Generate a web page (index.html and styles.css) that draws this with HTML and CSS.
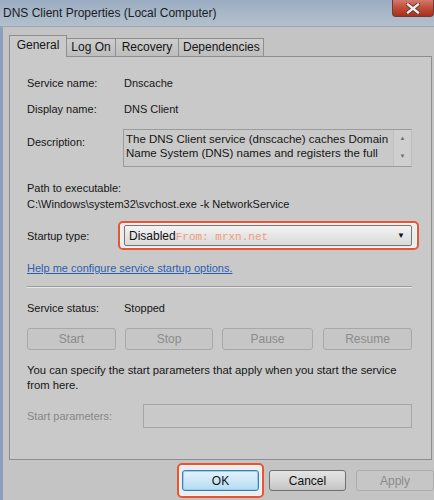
FILE: index.html
```html
<!DOCTYPE html>
<html lang="en">
<head>
  <meta charset="UTF-8">
  <title>DNS Client Properties (Local Computer)</title>
  <link rel="stylesheet" href="styles.css">
</head>
<body>
  <div class="window">
    <div class="titlebar">
      <span class="caption">DNS Client Properties (Local Computer)</span>
      <span class="close">
        <svg width="14" height="11" viewBox="0 0 14 11">
          <path d="M2 1.5 L12 9.5 M12 1.5 L2 9.5" stroke="#5a2a22" stroke-width="4" stroke-linecap="square"/>
          <path d="M2 1.5 L12 9.5 M12 1.5 L2 9.5" stroke="#ececec" stroke-width="2.4" stroke-linecap="square"/>
        </svg>
      </span>
    </div>

    <div class="client">
      <div class="tabs">
        <div class="tab active">General</div>
        <div class="tab">Log On</div>
        <div class="tab">Recovery</div>
        <div class="tab">Dependencies</div>
      </div>

      <div class="panel">
        <div class="row">
          <span class="label">Service name:</span>
          <span>Dnscache</span>
        </div>
        <div class="row gap-12">
          <span class="label">Display name:</span>
          <span>DNS Client</span>
        </div>
        <div class="row desc-row">
          <span class="label">Description:</span>
          <div class="textbox">
            <div class="textbox-text">The DNS Client service (dnscache) caches Domain Name System (DNS) names and registers the full</div>
            <div class="scrollbar">
              <span class="arrow">&#9650;</span>
              <span class="arrow">&#9660;</span>
            </div>
          </div>
        </div>

        <div class="path">
          <div>Path to executable:</div>
          <div>C:\Windows\system32\svchost.exe -k NetworkService</div>
        </div>

        <div class="row startup-row">
          <span class="label short">Startup type:</span>
          <div class="mark">
            <div class="combo">
              <span>Disabled</span><span class="stamp">From: mrxn.net</span>
              <span class="combo-arrow">&#9660;</span>
            </div>
          </div>
        </div>

        <a class="link" href="#">Help me configure service startup options.</a>

        <div class="separator"></div>

        <div class="row status-row">
          <span class="label">Service status:</span>
          <span>Stopped</span>
        </div>

        <div class="service-buttons">
          <button class="btn start" disabled>Start</button>
          <button class="btn stop" disabled>Stop</button>
          <button class="btn pause" disabled>Pause</button>
          <button class="btn resume" disabled>Resume</button>
        </div>

        <p class="hint">You can specify the start parameters that apply when you start the service from here.</p>

        <div class="row params-row">
          <span class="label muted">Start parameters:</span>
          <div class="params-input"></div>
        </div>
      </div>

      <div class="footer">
        <div class="mark ok-mark">
          <button class="btn dialog default">OK</button>
        </div>
        <button class="btn dialog">Cancel</button>
        <button class="btn dialog" disabled>Apply</button>
      </div>
    </div>
  </div>
</body>
</html>
```

FILE: styles.css
```css
html, body {
  margin: 0;
  padding: 0;
}

body {
  width: 434px;
  height: 500px;
  overflow: hidden;
  font-family: "Liberation Sans", Arial, sans-serif;
  font-size: 11px;
  color: #161616;
  background: #c3c3c3;
}

.window {
  display: flex;
  flex-direction: column;
  height: 500px;
}

/* caption bar */
.titlebar {
  height: 27px;
  display: flex;
  align-items: flex-start;
  justify-content: space-between;
  background: linear-gradient(180deg, #9badc2 0%, #a9b8c9 55%, #b3bfcc 100%);
  border-bottom: 1px solid #9aa6b4;
  box-sizing: border-box;
}

.caption {
  margin: 6px 0 0 3px;
  font-size: 12px;
  line-height: 14px;
  color: #1c1c1c;
}

.close {
  width: 42px;
  height: 17px;
  display: flex;
  align-items: center;
  justify-content: center;
  background: linear-gradient(180deg, #d27a6c 0%, #c1503c 45%, #a8301c 100%);
  border: 1px solid #6e3a33;
  border-top: none;
  border-radius: 0 0 4px 4px;
  box-sizing: border-box;
}

/* dialog body */
.client {
  flex: 1;
  display: flex;
  flex-direction: column;
  padding: 8px 2px 0 6px;
  border-left: 3px solid #8aa0bc;
  background: #c4c4c4;
}

.tabs {
  display: flex;
  align-items: flex-end;
  height: 21px;
  position: relative;
  z-index: 1;
}

.tab {
  height: 18px;
  line-height: 17px;
  padding: 0 4px;
  border: 1px solid #8e8e8e;
  border-bottom: none;
  border-left: none;
  background: linear-gradient(180deg, #cdcdcd 0%, #bdbdbd 100%);
  box-sizing: border-box;
  font-size: 12px;
  white-space: nowrap;
  text-align: center;
}

.tab:nth-child(2) { width: 49px; }
.tab:nth-child(3) { width: 63px; }
.tab:nth-child(4) { width: 85px; }

.tab.active {
  width: 58px;
  height: 22px;
  margin-bottom: -1px;
  line-height: 19px;
  border-left: 1px solid #8e8e8e;
  background: #c9c9c9;
}

.panel {
  display: flex;
  flex-direction: column;
  width: 423px;
  height: 404px;
  padding: 19px 19px 0 17px;
  border: 1px solid #8e8e8e;
  background: #c9c9c9;
  box-sizing: border-box;
}

.row {
  display: flex;
  align-items: center;
  line-height: 14px;
}

.label {
  width: 97px;
  flex: none;
}

.label.short {
  width: 91px;
}

.muted {
  color: #878787;
}

.gap-12 {
  margin-top: 12px;
}

.desc-row {
  align-items: flex-start;
  margin-top: 13px;
}

.desc-row .label {
  padding-top: 6px;
  width: 96px;
}

.textbox {
  flex: 1;
  height: 38px;
  display: flex;
  border: 1px solid #9c9c9c;
  border-right-color: #bdbdbd;
  box-sizing: border-box;
  background: #c9c9c9;
}

.textbox-text {
  flex: 1;
  padding: 2px 2px 0 2px;
  line-height: 14px;
  font-size: 11.5px;
  overflow: hidden;
}

.scrollbar {
  width: 17px;
  display: flex;
  flex-direction: column;
  justify-content: space-between;
  align-items: center;
  padding: 4px 0 6px;
  background: #cfcfcf;
  border-left: 1px solid #c0c0c0;
}

.arrow {
  font-size: 6px;
  line-height: 8px;
  color: #6e6e6e;
}

.path {
  margin-top: 13px;
  line-height: 16px;
}

.startup-row {
  margin-top: 9px;
}

/* red annotation frames */
.mark {
  border: 2px solid #e85530;
  border-radius: 5px;
  background: #ededed;
  box-shadow: inset 0 0 0 1px #f8f8f8;
}

.startup-row .mark {
  flex: 1;
  padding: 2px 5px 2px 4px;
  margin-right: -7px;
}

.combo {
  height: 21px;
  display: flex;
  align-items: center;
  padding: 0 4px;
  border: 1px solid #767676;
  border-radius: 2px;
  background: linear-gradient(180deg, #f4f4f4 0%, #e6e6e6 50%, #dadada 100%);
  box-sizing: border-box;
  font-size: 12px;
  color: #111;
}

.stamp {
  font-family: "Liberation Mono", "Courier New", monospace;
  font-size: 11px;
  color: #f49a7c;
  margin-top: 3px;
}

.combo-arrow {
  margin-left: auto;
  font-size: 8px;
  color: #111;
  padding-right: 2px;
}

.link {
  margin-top: 11px;
  line-height: 14px;
  color: #2b60b0;
  text-decoration: underline;
  align-self: flex-start;
}

.separator {
  margin-top: 11px;
  height: 1px;
  border-top: 1px solid #9d9d9d;
  background: #e8e8e8;
}

.status-row {
  margin-top: 13px;
}

.service-buttons {
  display: flex;
  gap: 9px;
  margin-top: 13px;
}

.btn {
  height: 22px;
  padding: 0;
  border: 1px solid #a8a8a8;
  border-radius: 3px;
  background: #c6c6c6;
  font-family: "Liberation Sans", Arial, sans-serif;
  font-size: 12px;
  color: #8b8b8b;
}

.start { width: 89px; }
.stop { width: 88px; }
.pause { width: 91px; }
.resume { width: 89px; margin-left: 1px; }

.hint {
  margin: 13px 0 0;
  line-height: 15px;
  font-size: 11.3px;
}

.params-row {
  margin-top: 11px;
}

.params-row .label {
  width: 116px;
}

.params-input {
  flex: 1;
  height: 24px;
  border: 1px solid #a6a6a6;
  background: #c9c9c9;
  box-sizing: border-box;
}

/* OK / Cancel / Apply */
.footer {
  display: flex;
  justify-content: flex-end;
  align-items: center;
  gap: 10px;
  padding-top: 10px;
  margin-right: -2px;
}

.ok-mark {
  padding: 5px 3px;
  margin: -7px -5px;
}

.btn.dialog {
  width: 77px;
  height: 21px;
  color: #111;
  border: 1px solid #6f6f6f;
  background: linear-gradient(180deg, #e4e4e4 0%, #d6d6d6 50%, #c4c4c4 100%);
}

.btn.dialog.default {
  display: block;
  border-color: #3d7fb3;
  background: linear-gradient(180deg, #e2f1fb 0%, #cde7f7 50%, #b6dbf1 100%);
  box-shadow: inset 0 0 0 1px #8fd0f4;
}

.btn.dialog:disabled {
  width: 78px;
  color: #8b8b8b;
  border-color: #adadad;
  background: #c6c6c6;
}
```
